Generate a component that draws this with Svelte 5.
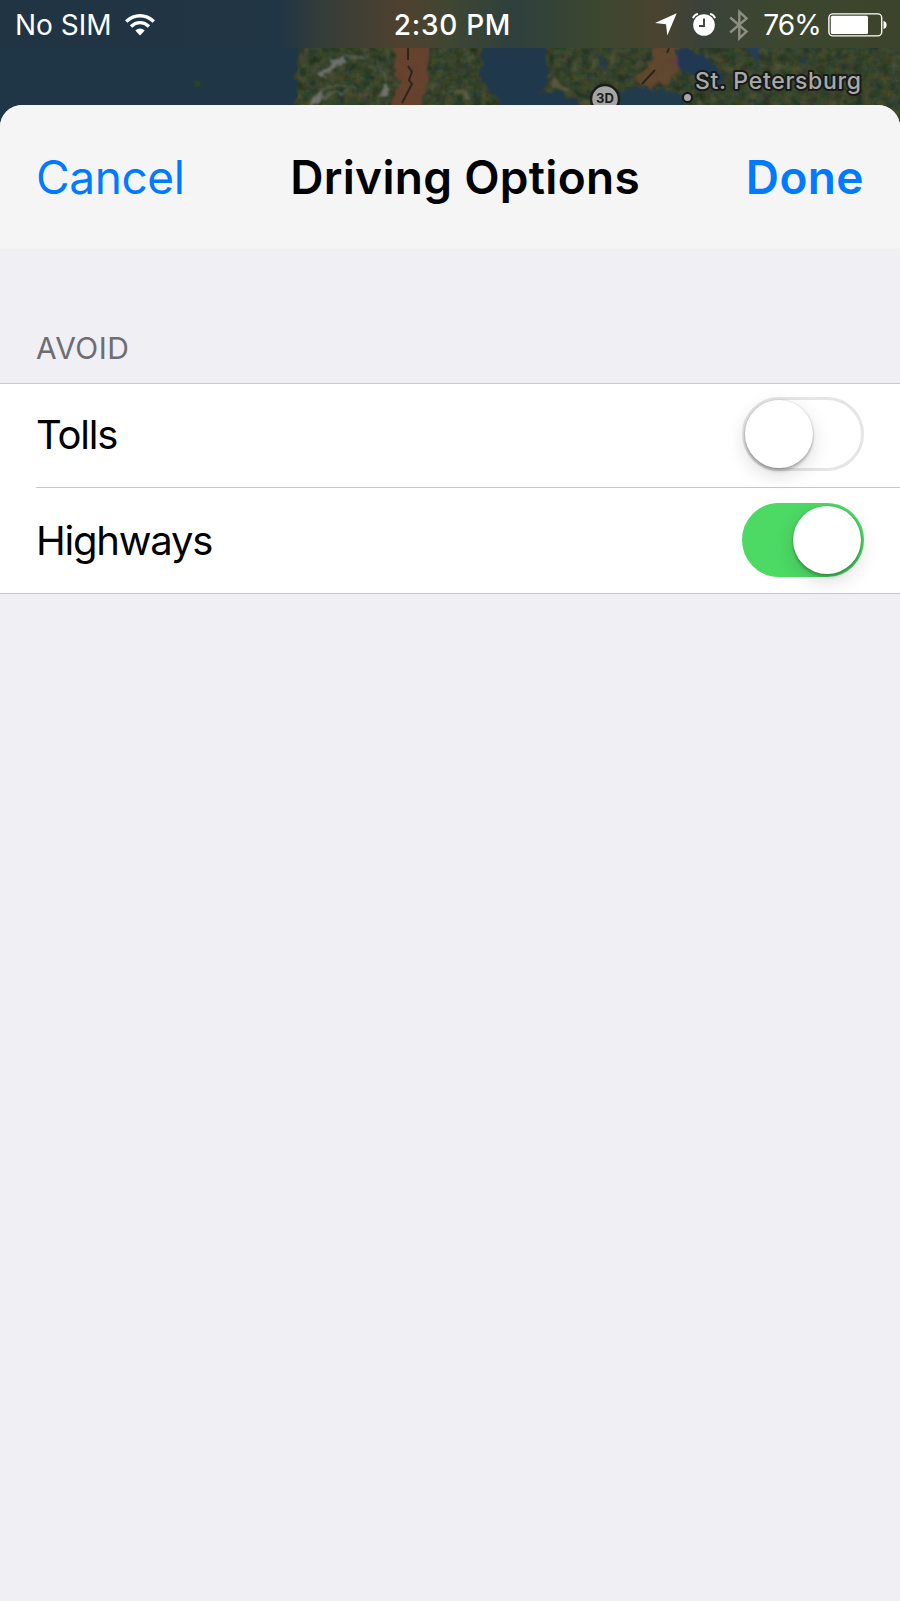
<script>
  let title = 'Driving Options';
  let options = [
    { id: 'tolls', label: 'Tolls', on: false },
    { id: 'highways', label: 'Highways', on: true },
  ];

  function toggle(option) {
    option.on = !option.on;
    options = options;
  }
</script>

<div class="screen">
  <svg class="map" width="900" height="130" viewBox="0 0 900 130" aria-hidden="true">
    <defs>
      <filter id="soft" x="-5%" y="-20%" width="110%" height="140%" color-interpolation-filters="sRGB">
        <feTurbulence type="fractalNoise" baseFrequency="0.09" numOctaves="3" seed="8" result="n" />
        <feDisplacementMap in="SourceGraphic" in2="n" scale="12" xChannelSelector="R" yChannelSelector="G" />
        <feGaussianBlur stdDeviation="0.9" />
      </filter>
      <filter id="grain" x="0" y="0" width="100%" height="100%" color-interpolation-filters="sRGB">
        <feTurbulence type="fractalNoise" baseFrequency="0.11" numOctaves="4" seed="3" />
        <feColorMatrix values="0.4 0.1 0 0 -0.03  0.18 0.2 0 0 0.07  0.1 0.1 0.2 0 -0.03  0 0 0 0 1" />
        <feComposite in2="SourceGraphic" operator="in" />
      </filter>
      <linearGradient id="bar">
        <stop offset="0" stop-color="#203443" />
        <stop offset="0.31" stop-color="#203545" />
        <stop offset="0.36" stop-color="#363d38" />
        <stop offset="0.45" stop-color="#4f412f" />
        <stop offset="0.5" stop-color="#3f4632" />
        <stop offset="0.57" stop-color="#2e403d" />
        <stop offset="0.66" stop-color="#3c4730" />
        <stop offset="0.73" stop-color="#49432f" />
        <stop offset="0.78" stop-color="#3b423a" />
        <stop offset="0.86" stop-color="#3d462f" />
        <stop offset="1" stop-color="#3c442b" />
      </linearGradient>
    </defs>
    <rect width="900" height="130" fill="#1f3646" />
    <!-- land, then the rough ground over it -->
    <g filter="url(#soft)">
      <path d="M301 40H920V125H291L298 96L296 75Z" fill="#35432b" />
    </g>
    <path d="M301 46H900V130H293L298 96L297 75Z" fill="#fff" filter="url(#grain)" opacity=".6" />
    <g filter="url(#soft)">
      <!-- snow and dry patches -->
      <path d="M318 76L330 64L343 56L347 61L334 70L324 77ZM308 112L312 100L324 90L320 104ZM378 94L384 82L389 88L386 97Z" fill="#7c7d7c" opacity=".8" />
      <path d="M324 90Q340 82 356 87M375 60Q382 70 384 80M346 54L366 60M322 98L350 90" fill="none" stroke="#686f62" stroke-width="2" opacity=".7" />
      <path d="M553 78L566 86L572 94L562 92L552 86ZM446 89L464 92L468 99L452 94Z" fill="#666247" opacity=".7" />
      <!-- highlighted regions -->
      <path d="M391 30H427L427 82L416 120H384L398 84Z" fill="#6b432f" opacity=".9" />
      <path d="M652 42H682L680 62L670 84L648 88L632 80L650 68Z" fill="#67482f" opacity=".85" />
      <!-- water -->
      <path d="M484 30H544L548 78L542 93L562 92L576 120H510L498 97L482 84Z" fill="#20384c" />
      <path d="M676 50L692 51L710 60L726 76L718 90L700 80L677 67Z" fill="#213852" />
      <path d="M618 91L640 87L664 92L684 95L684 120H618Z" fill="#213b4d" />
      <path d="M748 40H764L760 60L752 60ZM798 59L806 60L810 64L802 63ZM602 52L605 68L600 66Z" fill="#243d59" />
      <path d="M560 99L579 99L590 120H560Z" fill="#20384c" />
      <path d="M676 56L680 68L674 66Z" fill="#663758" />
    </g>
    <path d="M194 80l7 1-1 5-5 2z" fill="#294029" />
    <path d="M408 48V60M408 66L412 72L409 80L412 84L402 103M669 48L667 53M655 70L642 84" fill="none" stroke="#2c251c" stroke-width="2" />
    <circle cx="605" cy="99" r="14" fill="#a5a5a3" stroke="#1b1d1b" stroke-width="2.5" />
    <text x="605" y="103.2" text-anchor="middle" class="pin">3D</text>
    <circle cx="687.5" cy="97.5" r="4.6" fill="#a9a7a6" stroke="#171916" stroke-width="2.2" />
    <text x="695" y="89" class="city" textLength="166" lengthAdjust="spacing">St. Petersburg</text>
    <rect width="900" height="48" fill="url(#bar)" />
  </svg>

  <div class="status">
    <div class="left">
      <span class="carrier">No SIM</span>
      <svg width="30" height="22" viewBox="0 0 30 22">
        <g fill="none" stroke="#fff" stroke-width="3.4">
          <path d="M1.2 7.5Q7.5 1.7 15 1.7T28.8 7.5" />
          <path d="M6 12.5Q10.2 8.6 15 8.6T24 12.5" />
        </g>
        <path d="M10.3 16.5Q15 12.6 19.7 16.5L15 21.5Z" fill="#fff" />
      </svg>
    </div>
    <span class="time">2:30 PM</span>
    <div class="right">
      <svg class="arrow" width="22" height="23" viewBox="0 0 22 23">
        <path d="M21.7 0.3L12.3 22.5L11 11.2L0 10Z" fill="#fff" />
      </svg>
      <svg class="alarm" width="24" height="23" viewBox="0 0 24 23">
        <circle cx="12" cy="12" r="10.8" fill="#fff" />
        <path d="M.8 5.2Q2.4 1.6 6 .9M23.2 5.2Q21.6 1.6 18 .9" fill="none" stroke="#fff" stroke-width="1.9" />
        <path d="M12 5.5V13H7" fill="none" stroke="#3d4437" stroke-width="1.9" />
      </svg>
      <svg class="bluetooth" width="20" height="32" viewBox="0 0 20 32">
        <path d="M1.2 8.5L17.5 22.6L10.3 29.2V2.8L17.5 9.4L1.2 23.5" fill="none" stroke="#8b9083" stroke-width="2.4" />
      </svg>
      <span class="percent">76%</span>
      <svg class="battery" width="60" height="24" viewBox="0 0 60 24">
        <rect x=".9" y=".9" width="52.8" height="22" rx="4" fill="none" stroke="#fff" stroke-width="1.4" />
        <rect x="2.8" y="2.8" width="37.2" height="18.2" rx="1.5" fill="#fff" />
        <path d="M55.5 8Q58.6 8.4 58.6 12T55.5 16Z" fill="#fff" />
      </svg>
    </div>
  </div>

  <div class="sheet">
    <header>
      <button class="cancel">Cancel</button>
      <h1>{title}</h1>
      <button class="done">Done</button>
    </header>

    <h2>AVOID</h2>
    <ul>
      {#each options as option (option.id)}
        <li>
          <span class="label">{option.label}</span>
          <button
            class="switch"
            class:on={option.on}
            role="switch"
            aria-checked={option.on}
            aria-label={option.label}
            on:click={() => toggle(option)}
          >
            <span class="knob"></span>
          </button>
        </li>
      {/each}
    </ul>
  </div>
</div>

<style>
  :global(body) {
    margin: 0;
    background: #efeff4;
  }
  .screen {
    position: relative;
    display: flex;
    flex-direction: column;
    width: 900px;
    height: 1601px;
    overflow: hidden;
    font-family: Inter, "Liberation Sans", sans-serif;
  }
  .map {
    position: absolute;
    top: 0;
    left: 0;
  }
  .pin {
    font-size: 13px;
    font-weight: 700;
    fill: #1d1d1d;
  }
  .city {
    font-size: 23px;
    font-weight: 500;
    fill: #a9a9a7;
    stroke: #171a16;
    stroke-width: 4px;
    stroke-linejoin: round;
    paint-order: stroke;
  }

  .status {
    position: relative;
    display: grid;
    grid-template-columns: 1fr auto 1fr;
    align-items: center;
    box-sizing: border-box;
    height: 105px;
    padding: 0 12px 56px 15px;
    color: #fff;
    font-size: 28px;
    line-height: 48px;
    white-space: nowrap;
  }
  .status svg {
    display: block;
    flex: none;
  }
  .left, .right {
    display: flex;
    align-items: center;
  }
  .left {
    gap: 13px;
  }
  .time {
    padding-left: 2px;
    font-weight: 500;
    letter-spacing: 0.7px;
  }
  .right {
    justify-content: flex-end;
  }
  .alarm {
    margin-left: 15px;
  }
  .bluetooth {
    margin-left: 13px;
  }
  .percent {
    margin: 0 7px 0 14px;
    letter-spacing: -0.8px;
  }

  .sheet {
    position: relative;
    flex: 1;
    overflow: hidden;
    border-radius: 22px 22px 0 0;
    background: #efeff4;
  }
  header {
    display: flex;
    align-items: center;
    justify-content: space-between;
    box-sizing: border-box;
    height: 144px;
    padding: 2px 36px 0 36px;
    background: #f5f5f6;
    border-bottom: 2px solid #f4f4f8;
  }
  button {
    padding: 0;
    border: 0;
    background: none;
    font: inherit;
    color: #007aff;
    cursor: pointer;
  }
  .cancel, .done, h1 {
    font-size: 46px;
    line-height: 56px;
  }
  .cancel {
    letter-spacing: -0.4px;
  }
  .done {
    font-weight: 600;
    letter-spacing: 0.4px;
  }
  h1 {
    margin: 0;
    font-weight: 600;
    letter-spacing: 0.3px;
  }
  h2 {
    margin: 79px 0 14px 36px;
    color: #6d6d72;
    font-size: 30px;
    font-weight: 400;
    line-height: 41px;
    letter-spacing: 0.5px;
  }
  ul {
    margin: 0;
    padding: 0;
    list-style: none;
    background: #fff;
    border-top: 1px solid #c8c7cc;
    border-bottom: 1px solid #c8c7cc;
  }
  li {
    display: flex;
    align-items: center;
    justify-content: space-between;
    box-sizing: border-box;
    height: 103px;
    margin-left: 36px;
    padding: 0 36px 3px 0;
  }
  li + li {
    height: 106px;
    padding-bottom: 1px;
    border-top: 1px solid #c8c7cc;
  }
  .label {
    padding-top: 2px;
    font-size: 40px;
    line-height: 50px;
    letter-spacing: -1.2px;
  }
  .switch {
    display: flex;
    align-items: center;
    box-sizing: border-box;
    width: 122px;
    height: 74px;
    border: 3px solid #e5e5e5;
    border-radius: 37px;
    background: #fff;
  }
  .knob {
    width: 68px;
    height: 68px;
    border-radius: 50%;
    background: #fff;
    box-shadow: 0 0 1px 1px rgba(0, 0, 0, 0.08), 0 3px 3px rgba(0, 0, 0, 0.22), 0 7px 20px rgba(0, 0, 0, 0.14);
  }
  .switch.on {
    justify-content: flex-end;
    border-color: #4cd964;
    background: #4cd964;
  }
</style>
